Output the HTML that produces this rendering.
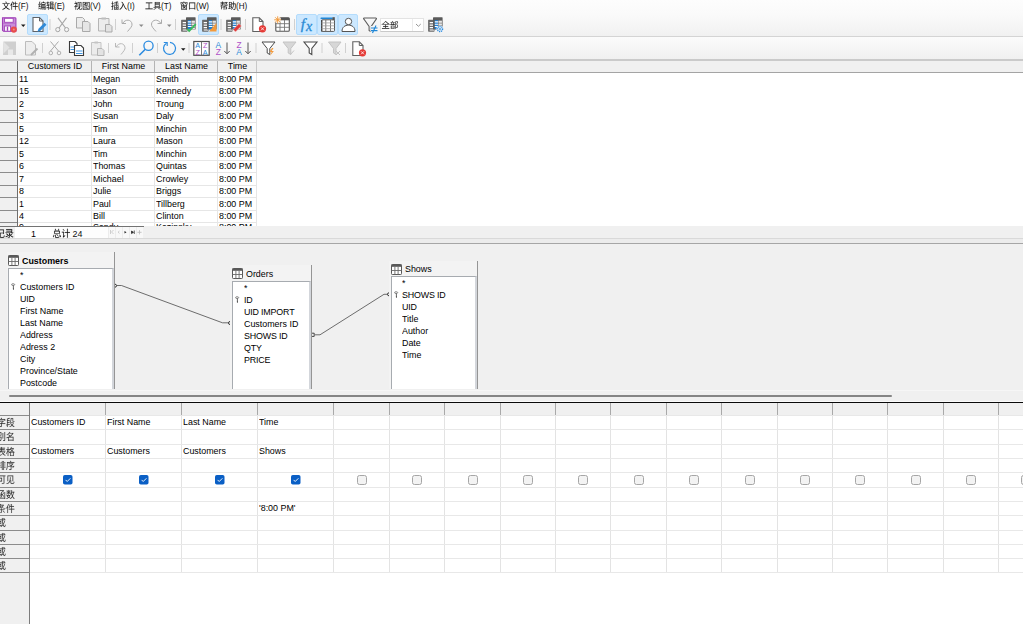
<!DOCTYPE html><html><head><meta charset='utf-8'><style>
*{margin:0;padding:0;box-sizing:border-box}
html,body{width:1023px;height:624px;overflow:hidden;background:#f0f0f0;font-family:"Liberation Sans", sans-serif;color:#000}
.a{position:absolute}
.t{position:absolute;white-space:nowrap;font-size:9.9px;line-height:12px;letter-spacing:0px;transform:scaleX(0.9);transform-origin:0 50%}
.c{transform-origin:50% 50%}
</style></head><body>
<div class='a' style='left:0;top:0;width:1023px;height:36px;background:linear-gradient(#fdfdfd 0%,#fafafa 40%,#f1f1f1 100%)'></div>
<div class='a' style='left:0;top:36px;width:1023px;height:1px;background:#d4d4d4'></div>
<div class='a' style='left:0;top:37px;width:1023px;height:23px;background:linear-gradient(#fbfbfb,#f0f0f0)'></div>
<div class='a' style='left:0;top:59px;width:1023px;height:2px;background:#cacaca'></div>
<div class='t' style='left:18.20px;top:0px;line-height:12px;color:#111;font-size:9px'>(F)</div>
<div class='t' style='left:54.20px;top:0px;line-height:12px;color:#111;font-size:9px'>(E)</div>
<div class='t' style='left:90.20px;top:0px;line-height:12px;color:#111;font-size:9px'>(V)</div>
<div class='t' style='left:127.20px;top:0px;line-height:12px;color:#111;font-size:9px'>(I)</div>
<div class='t' style='left:161.20px;top:0px;line-height:12px;color:#111;font-size:9px'>(T)</div>
<div class='t' style='left:196.20px;top:0px;line-height:12px;color:#111;font-size:9px'>(W)</div>
<div class='t' style='left:236.20px;top:0px;line-height:12px;color:#111;font-size:9px'>(H)</div>
<svg class='a' style='left:0;top:0' width='1023' height='60' viewBox='0 0 1023 60'><path d='M2.5 17.7h12.5c0.5 0 0.9 0.4 0.9 0.9v12.6h-12.5l-0.9-0.9z' fill='#c98fda' stroke='#a040b8' stroke-width='1.1'/><rect x='4.6' y='18.3' width='8.6' height='4' fill='#fff' stroke='#a040b8' stroke-width='0.9'/><path d='M3.2 23.3h12' stroke='#b562c8' stroke-width='0.7'/><rect x='4.6' y='26' width='6' height='5.2' fill='#fff' stroke='#a040b8' stroke-width='0.9'/><rect x='6.8' y='26.6' width='1.4' height='4.2' fill='#a040b8'/><circle cx='13.8' cy='29.6' r='3.1' fill='#e84c4c'/><circle cx='13.8' cy='29.6' r='1' fill='#f08a8a'/><path d='M21 24.6h4.5l-2.25 2.5z' fill='#1a1a1a'/><rect x='27.5' y='14.5' width='20' height='20' rx='1.5' fill='#cce8ff' stroke='#b4dcfc' stroke-width='1'/><path d='M33 17.5h6.5l3.5 3.5v10.5h-10z' fill='#fff' stroke='#5f6368' stroke-width='1.1'/><path d='M39.5 17.5v3.5h3.5' fill='none' stroke='#5f6368' stroke-width='1'/><path d='M37.5 31.8l1-3 6-6 2 2-6 6z' fill='#2f8ad8'/><path d='M50 19V30' stroke='#d0d0d0' stroke-width='1'/><path d='M58 17.8L65.5 28M66.5 17.8L59 28' stroke='#a6a6a6' stroke-width='1.1' fill='none'/><circle cx='57.8' cy='29.6' r='2.1' fill='none' stroke='#a6a6a6' stroke-width='1'/><circle cx='66.6' cy='29.6' r='2.1' fill='none' stroke='#a6a6a6' stroke-width='1'/><path d='M76.5 17.5h6l2 2v8.5h-8z' fill='#ececec' stroke='#a9a9a9'/><path d='M82.5 21.5h5.5l2 2v8h-7.5z' fill='#e6e6e6' stroke='#a9a9a9'/><path d='M98.5 18.5h10.5v12.5h-10.5z' fill='#ececec' stroke='#b5b5b5'/><path d='M101.5 17.5h4.5v2h-4.5z' fill='#bdbdbd'/><path d='M105.5 24.5h4.5l2 2v5.5h-6.5z' fill='#e3e3e3' stroke='#a9a9a9'/><path d='M115.5 19V30' stroke='#d0d0d0' stroke-width='1'/><path d='M122 19.5v4h4M122.5 23.5c3-5 9-4 9.5 0.5 0.3 2.3-1.5 4-4.5 7.5' stroke='#ababab' stroke-width='1' fill='none'/><path d='M139 24.6h4.5l-2.25 2.5z' fill='#8a8a8a'/><path d='M161.5 19.5v4h-4M161 23.5c-3-5-9-4-9.5 0.5-0.3 2.3 1.5 4 4.5 7.5' stroke='#ababab' stroke-width='1' fill='none'/><path d='M167 24.6h4.5l-2.25 2.5z' fill='#8a8a8a'/><path d='M175.5 19V30' stroke='#d0d0d0' stroke-width='1'/><rect x='181.1' y='19.8' width='6.4' height='11.9' rx='0.6' fill='#6a6a6a'/><path d='M182.7 22.6h4.3M182.7 25.1h4.3M182.7 27.6h4.3M182.7 30h4.3' stroke='#fff' stroke-width='1.1'/><rect x='186.0' y='17.2' width='9.6' height='12.4' rx='0.6' fill='#5a5a5a'/><rect x='187.8' y='20.2' width='3.2' height='9' fill='#1f7fd4'/><rect x='191.5' y='20.2' width='3.4' height='9' fill='#9a9a9a'/><path d='M187.8 21.9h3.2M187.8 24.2h3.2M187.8 26.5h3.2M191.5 21.9h3.4M191.5 24.2h3.4M191.5 26.5h3.4M191.5 28.7h3.4' stroke='#fff' stroke-width='1.1'/><path d='M187.2 28.8l2 2.2 6.6-6.8' stroke='#36bb5a' stroke-width='1.8' fill='none'/><rect x='198.5' y='14.5' width='20' height='20' rx='1.5' fill='#cce8ff' stroke='#b4dcfc' stroke-width='1'/><rect x='202.1' y='19.8' width='6.4' height='11.9' rx='0.6' fill='#6a6a6a'/><path d='M203.7 22.6h4.3M203.7 25.1h4.3M203.7 27.6h4.3M203.7 30h4.3' stroke='#fff' stroke-width='1.1'/><rect x='207.0' y='17.2' width='9.6' height='12.4' rx='0.6' fill='#5a5a5a'/><rect x='208.8' y='20.2' width='3.2' height='9' fill='#1f7fd4'/><rect x='212.5' y='20.2' width='3.4' height='9' fill='#9a9a9a'/><path d='M208.8 21.9h3.2M208.8 24.2h3.2M208.8 26.5h3.2M212.5 21.9h3.4M212.5 24.2h3.4M212.5 26.5h3.4M212.5 28.7h3.4' stroke='#fff' stroke-width='1.1'/><path d='M209 31.5h7.5v-8.5z' fill='#f39a3c'/><path d='M221 19V30' stroke='#d0d0d0' stroke-width='1'/><rect x='226.1' y='19.8' width='6.4' height='11.9' rx='0.6' fill='#6a6a6a'/><path d='M227.7 22.6h4.3M227.7 25.1h4.3M227.7 27.6h4.3M227.7 30h4.3' stroke='#fff' stroke-width='1.1'/><rect x='231.0' y='17.2' width='9.6' height='12.4' rx='0.6' fill='#5a5a5a'/><rect x='232.8' y='20.2' width='3.2' height='9' fill='#1f7fd4'/><rect x='236.5' y='20.2' width='3.4' height='9' fill='#9a9a9a'/><path d='M232.8 21.9h3.2M232.8 24.2h3.2M232.8 26.5h3.2M236.5 21.9h3.4M236.5 24.2h3.4M236.5 26.5h3.4M236.5 28.7h3.4' stroke='#fff' stroke-width='1.1'/><path d='M233 29.5l6-6 2.5 2.5-6 6z' fill='#e03a3a' stroke='#f0f0f0' stroke-width='0.5'/><path d='M245.5 19V30' stroke='#d0d0d0' stroke-width='1'/><path d='M252.8 17.8h6.5l3.7 3.7v10h-10.2z' fill='#fff' stroke='#606060' stroke-width='1.1'/><path d='M259.3 17.8v3.7h3.7' fill='none' stroke='#606060'/><circle cx='262.5' cy='28.8' r='3.6' fill='#e53935'/><path d='M261 27.3l3 3M264 27.3l-3 3' stroke='#fff' stroke-width='0.8'/><rect x='275.8' y='17.8' width='13.5' height='13.5' rx='1' fill='#fff' stroke='#555' stroke-width='1.1'/><rect x='275.8' y='17.8' width='13.5' height='2.5' fill='#555'/><path d='M280 20v11M284.5 20v11M276 23.7h13M276 27.3h13' stroke='#777' stroke-width='0.9'/><circle cx='277.7' cy='19.8' r='3.2' fill='#fafafa'/><path d='M277.7 16.3v7M274.2 19.8h7M275.2 17.3l5 5M280.2 17.3l-5 5' stroke='#f29633' stroke-width='0.9'/><path d='M294.5 19V30' stroke='#d0d0d0' stroke-width='1'/><rect x='296.5' y='14.5' width='20' height='20' rx='1.5' fill='#cce8ff' stroke='#b4dcfc' stroke-width='1'/><rect x='317.5' y='14.5' width='20' height='20' rx='1.5' fill='#cce8ff' stroke='#b4dcfc' stroke-width='1'/><rect x='338.5' y='14.5' width='19' height='20' rx='1.5' fill='#cce8ff' stroke='#b4dcfc' stroke-width='1'/><text x='300.8' y='28.6' font-family='Liberation Serif' font-style='italic' font-size='15.5' fill='#2a8ad4' stroke='#2a8ad4' stroke-width='0.3'>f</text><text x='306' y='30.6' font-family='Liberation Serif' font-style='italic' font-size='14' fill='#2a8ad4' stroke='#2a8ad4' stroke-width='0.3'>x</text><rect x='321.5' y='19.8' width='13' height='11.6' rx='0.8' fill='#fff' stroke='#555' stroke-width='1'/><path d='M321.2 18.2h11' stroke='#1f86d6' stroke-width='1.6' stroke-linecap='round'/><rect x='332.5' y='17.2' width='2.3' height='3' fill='#555'/><path d='M321.8 20v11.5' stroke='#444' stroke-width='1.3'/><path d='M325.8 20v11.5M330.5 20v11.5' stroke='#666' stroke-width='0.9'/><path d='M321.5 22.9h13M321.5 25.8h13M321.5 28.7h13' stroke='#9a9a9a' stroke-width='0.8'/><circle cx='348.5' cy='21.5' r='3.2' fill='#fff' stroke='#555' stroke-width='1'/><path d='M342 31.5c0-4.5 3-6.3 6.5-6.3s6.5 1.8 6.5 6.3z' fill='#fff' stroke='#555' stroke-width='1'/><path d='M363.5 18.8c0-0.5 0.3-0.8 0.8-0.8h11.5c0.5 0 0.9 0.4 0.6 0.9l-5.2 7.6v4.6c0 0.6-0.5 0.6-0.9 0.3l-1.2-1v-3.9l-5.3-7.5z' fill='none' stroke='#5c5c5c' stroke-width='1.05'/><rect x='370.5' y='26' width='7.5' height='6.5' fill='#f6f6f6'/><path d='M371 28h6.5M371 30.6h6.5M376 25.5l-3.5 7.5' stroke='#1f86d6' stroke-width='1.15'/><rect x='380.5' y='18.5' width='43' height='13' fill='#fff' stroke='#e3e3e3'/><path d='M380.5 31.5h43' stroke='#c9c9c9'/><path d='M412.5 19v12' stroke='#ececec'/><path d='M416 24l2.4 2.3 2.4-2.3' fill='none' stroke='#8a8a8a' stroke-width='0.9'/><rect x='428.1' y='19.8' width='6.4' height='11.9' rx='0.6' fill='#6a6a6a'/><path d='M429.7 22.6h4.3M429.7 25.1h4.3M429.7 27.6h4.3M429.7 30h4.3' stroke='#fff' stroke-width='1.1'/><rect x='433.0' y='17.2' width='9.6' height='12.4' rx='0.6' fill='#5a5a5a'/><rect x='434.8' y='20.2' width='3.2' height='9' fill='#1f7fd4'/><rect x='438.5' y='20.2' width='3.4' height='9' fill='#9a9a9a'/><path d='M434.8 21.9h3.2M434.8 24.2h3.2M434.8 26.5h3.2M438.5 21.9h3.4M438.5 24.2h3.4M438.5 26.5h3.4M438.5 28.7h3.4' stroke='#fff' stroke-width='1.1'/><circle cx='440' cy='29' r='3.6' fill='#f6f6f6'/><circle cx='440' cy='29' r='2.6' fill='none' stroke='#2a8be0' stroke-width='1.3' stroke-dasharray='1.2 0.7'/><circle cx='440' cy='29' r='1' fill='none' stroke='#2a8be0' stroke-width='0.8'/><path d='M3.5 41.5h12.5v13.5h-13z' fill='#cfcfcf'/><path d='M3.5 41.5l6 6-6 6' fill='#e2e2e2'/><rect x='8' y='49.5' width='5' height='5.5' fill='#e8e8e8'/><path d='M25.5 41.5h6.5l3.5 3.5v10h-10z' fill='#ededed' stroke='#bcbcbc'/><path d='M31 55l6.5-6.5' stroke='#b0b0b0' stroke-width='2'/><path d='M42.5 43V53' stroke='#d0d0d0' stroke-width='1'/><path d='M50.5 41.5L58.5 51M58.5 41.5L50.5 51' stroke='#a9a9a9' stroke-width='1'/><circle cx='50.8' cy='53' r='1.8' fill='none' stroke='#a9a9a9' stroke-width='0.9'/><circle cx='59' cy='53' r='1.8' fill='none' stroke='#a9a9a9' stroke-width='0.9'/><path d='M69.5 41.5h5.5l2 2v9h-7.5z' fill='#fff' stroke='#3a3a3a' stroke-width='1.1'/><path d='M70.5 47h5M70.5 49.5h5' stroke='#2a8be0' stroke-width='0.9'/><path d='M74.5 45.5h6.5l2.5 2.5v7.5h-9z' fill='#fff' stroke='#3a3a3a' stroke-width='1.1'/><path d='M76 51h6.5M76 53.5h6.5' stroke='#2a8be0' stroke-width='0.9'/><path d='M91.5 42.5h9.5v12.5h-9.5z' fill='#ececec' stroke='#c4c4c4'/><path d='M94.5 41.5h3.5v2h-3.5z' fill='#c4c4c4'/><path d='M97.5 48.5h4.5l2 2v5h-6.5z' fill='#e3e3e3' stroke='#b5b5b5'/><path d='M108.5 43V53' stroke='#d0d0d0' stroke-width='1'/><path d='M115.5 43v4h4M116 47c3-5 8.5-4 9 0.5 0.3 2-1.2 3.5-4 7' stroke='#b9b9b9' stroke-width='1' fill='none'/><path d='M132.5 43V53' stroke='#d0d0d0' stroke-width='1'/><circle cx='148.5' cy='45.8' r='4.6' fill='none' stroke='#2a8be0' stroke-width='1.3'/><path d='M145.3 49.2l-6 6' stroke='#2a8be0' stroke-width='1.6'/><path d='M157.5 43V53' stroke='#d0d0d0' stroke-width='1'/><path d='M166.5 43.2a6 6 0 1 0 3.5 -0.8' fill='none' stroke='#2a8be0' stroke-width='1.2'/><path d='M163.8 42.5h3.4v3.5' fill='none' stroke='#2a8be0' stroke-width='1.1'/><path d='M181 48.3h4.5l-2.25 2.5z' fill='#1a1a1a'/><path d='M189 43V53' stroke='#d0d0d0' stroke-width='1'/><rect x='193.8' y='41.5' width='15.4' height='13.8' fill='#fff' stroke='#505050' stroke-width='1.2'/><path d='M201.5 41.5v14' stroke='#6a6a6a' stroke-width='0.9'/><text x='195.3' y='47.6' font-size='7.2' fill='#2a8ad8'>A</text><text x='195.5' y='54.6' font-size='7.2' fill='#b050c8'>Z</text><text x='202.9' y='47.6' font-size='7.2' fill='#b050c8'>Z</text><text x='202.7' y='54.6' font-size='7.2' fill='#2a8ad8'>A</text><text x='215.4' y='47.8' font-size='8.4' fill='#2a8ad8'>A</text><text x='215.8' y='54.8' font-size='8.4' fill='#b050c8'>Z</text><path d='M227 42.5v11M224.3 51l2.7 2.8 2.7-2.8' stroke='#555' stroke-width='1' fill='none'/><text x='236.6' y='47.8' font-size='8.4' fill='#b050c8'>Z</text><text x='236.2' y='54.8' font-size='8.4' fill='#2a8ad8'>A</text><path d='M248 42.5v11M245.3 51l2.7 2.8 2.7-2.8' stroke='#555' stroke-width='1' fill='none'/><path d='M256 43V53' stroke='#d0d0d0' stroke-width='1'/><path d='M262 42h13l-5.2 6.5v6l-2.6-1.5v-4.5z' fill='#fff' stroke='#4a4a4a' stroke-width='1'/><path d='M272 48l-2.5 4h2.2l-1.8 4 4-5h-2.2l1.8-3z' fill='#f39a3c'/><path d='M283 42h13l-5.2 6.5v6l-2.6-1.5v-4.5z' fill='#d7d7d7' stroke='#c4c4c4'/><path d='M290.5 54.5l3.5-4' stroke='#c4c4c4'/><path d='M304 42h13l-5.2 6.5v6l-2.6-1.5v-4.5z' fill='#fff' stroke='#4a4a4a' stroke-width='1.1'/><path d='M322 43V53' stroke='#d0d0d0' stroke-width='1'/><path d='M328.5 42h12.5l-5 6.5v6l-2.5-1.5v-4.5z' fill='#d7d7d7' stroke='#c4c4c4'/><path d='M336 51l4 4M340 51l-4 4' stroke='#c4c4c4'/><path d='M345.5 43V53' stroke='#d0d0d0' stroke-width='1'/><path d='M352.8 41.8h6.5l3.7 3.7v10h-10.2z' fill='#fff' stroke='#606060' stroke-width='1.1'/><path d='M359.3 41.8v3.7h3.7' fill='none' stroke='#606060'/><circle cx='362.5' cy='52.8' r='3.6' fill='#e53935'/><path d='M361 51.3l3 3M364 51.3l-3 3' stroke='#fff' stroke-width='0.8'/></svg>
<div class='a' style='left:0;top:61px;width:1023px;height:167px;background:#fff'></div>
<div class='a' style='left:0;top:61px;width:1023px;height:11px;background:#f0f0f0'></div>
<div class='a' style='left:0;top:72px;width:1023px;height:1px;background:#a4a4a4'></div>
<div class='a' style='left:0;top:72px;width:17px;height:1px;background:#707070'></div>
<div class='a' style='left:0;top:73px;width:17px;height:154px;background:#f0f0f0'></div>
<div class='a' style='left:17px;top:61px;width:1px;height:166px;background:#6e6e6e'></div>
<div class='a' style='left:91px;top:61px;width:1px;height:11px;background:#b4b4b4'></div>
<div class='a' style='left:91px;top:73px;width:1px;height:154px;background:#e6e6e6'></div>
<div class='a' style='left:154px;top:61px;width:1px;height:11px;background:#b4b4b4'></div>
<div class='a' style='left:154px;top:73px;width:1px;height:154px;background:#e6e6e6'></div>
<div class='a' style='left:217px;top:61px;width:1px;height:11px;background:#b4b4b4'></div>
<div class='a' style='left:217px;top:73px;width:1px;height:154px;background:#e6e6e6'></div>
<div class='a' style='left:256px;top:61px;width:1px;height:11px;background:#b4b4b4'></div>
<div class='a' style='left:256px;top:73px;width:1px;height:154px;background:#e6e6e6'></div>
<div class='a' style='left:256px;top:61px;width:1px;height:11px;background:#c8c8c8'></div>
<div class='t dg c' style='left:18px;top:60.3px;width:74px;text-align:center;line-height:12px'>Customers ID</div>
<div class='t dg c' style='left:92px;top:60.3px;width:63px;text-align:center;line-height:12px'>First Name</div>
<div class='t dg c' style='left:155px;top:60.3px;width:63px;text-align:center;line-height:12px'>Last Name</div>
<div class='t dg c' style='left:218px;top:60.3px;width:39px;text-align:center;line-height:12px'>Time</div>
<div class='a' style='left:0;top:84.50px;width:17px;height:1px;background:#8c8c8c'></div>
<div class='a' style='left:18px;top:84.50px;width:239px;height:1px;background:#e6e6e6'></div>
<div class='t dg' style='left:18.5px;top:72.60px;line-height:12.5px'>11</div>
<div class='t dg' style='left:92.5px;top:72.60px;line-height:12.5px'>Megan</div>
<div class='t dg' style='left:155.5px;top:72.60px;line-height:12.5px'>Smith</div>
<div class='t dg' style='left:218.5px;top:72.60px;line-height:12.5px'>8:00 PM</div>
<div class='a' style='left:0;top:97.00px;width:17px;height:1px;background:#8c8c8c'></div>
<div class='a' style='left:18px;top:97.00px;width:239px;height:1px;background:#e6e6e6'></div>
<div class='t dg' style='left:18.5px;top:85.10px;line-height:12.5px'>15</div>
<div class='t dg' style='left:92.5px;top:85.10px;line-height:12.5px'>Jason</div>
<div class='t dg' style='left:155.5px;top:85.10px;line-height:12.5px'>Kennedy</div>
<div class='t dg' style='left:218.5px;top:85.10px;line-height:12.5px'>8:00 PM</div>
<div class='a' style='left:0;top:109.50px;width:17px;height:1px;background:#8c8c8c'></div>
<div class='a' style='left:18px;top:109.50px;width:239px;height:1px;background:#e6e6e6'></div>
<div class='t dg' style='left:18.5px;top:97.60px;line-height:12.5px'>2</div>
<div class='t dg' style='left:92.5px;top:97.60px;line-height:12.5px'>John</div>
<div class='t dg' style='left:155.5px;top:97.60px;line-height:12.5px'>Troung</div>
<div class='t dg' style='left:218.5px;top:97.60px;line-height:12.5px'>8:00 PM</div>
<div class='a' style='left:0;top:122.00px;width:17px;height:1px;background:#8c8c8c'></div>
<div class='a' style='left:18px;top:122.00px;width:239px;height:1px;background:#e6e6e6'></div>
<div class='t dg' style='left:18.5px;top:110.10px;line-height:12.5px'>3</div>
<div class='t dg' style='left:92.5px;top:110.10px;line-height:12.5px'>Susan</div>
<div class='t dg' style='left:155.5px;top:110.10px;line-height:12.5px'>Daly</div>
<div class='t dg' style='left:218.5px;top:110.10px;line-height:12.5px'>8:00 PM</div>
<div class='a' style='left:0;top:134.50px;width:17px;height:1px;background:#8c8c8c'></div>
<div class='a' style='left:18px;top:134.50px;width:239px;height:1px;background:#e6e6e6'></div>
<div class='t dg' style='left:18.5px;top:122.60px;line-height:12.5px'>5</div>
<div class='t dg' style='left:92.5px;top:122.60px;line-height:12.5px'>Tim</div>
<div class='t dg' style='left:155.5px;top:122.60px;line-height:12.5px'>Minchin</div>
<div class='t dg' style='left:218.5px;top:122.60px;line-height:12.5px'>8:00 PM</div>
<div class='a' style='left:0;top:147.00px;width:17px;height:1px;background:#8c8c8c'></div>
<div class='a' style='left:18px;top:147.00px;width:239px;height:1px;background:#e6e6e6'></div>
<div class='t dg' style='left:18.5px;top:135.10px;line-height:12.5px'>12</div>
<div class='t dg' style='left:92.5px;top:135.10px;line-height:12.5px'>Laura</div>
<div class='t dg' style='left:155.5px;top:135.10px;line-height:12.5px'>Mason</div>
<div class='t dg' style='left:218.5px;top:135.10px;line-height:12.5px'>8:00 PM</div>
<div class='a' style='left:0;top:159.50px;width:17px;height:1px;background:#8c8c8c'></div>
<div class='a' style='left:18px;top:159.50px;width:239px;height:1px;background:#e6e6e6'></div>
<div class='t dg' style='left:18.5px;top:147.60px;line-height:12.5px'>5</div>
<div class='t dg' style='left:92.5px;top:147.60px;line-height:12.5px'>Tim</div>
<div class='t dg' style='left:155.5px;top:147.60px;line-height:12.5px'>Minchin</div>
<div class='t dg' style='left:218.5px;top:147.60px;line-height:12.5px'>8:00 PM</div>
<div class='a' style='left:0;top:172.00px;width:17px;height:1px;background:#8c8c8c'></div>
<div class='a' style='left:18px;top:172.00px;width:239px;height:1px;background:#e6e6e6'></div>
<div class='t dg' style='left:18.5px;top:160.10px;line-height:12.5px'>6</div>
<div class='t dg' style='left:92.5px;top:160.10px;line-height:12.5px'>Thomas</div>
<div class='t dg' style='left:155.5px;top:160.10px;line-height:12.5px'>Quintas</div>
<div class='t dg' style='left:218.5px;top:160.10px;line-height:12.5px'>8:00 PM</div>
<div class='a' style='left:0;top:184.50px;width:17px;height:1px;background:#8c8c8c'></div>
<div class='a' style='left:18px;top:184.50px;width:239px;height:1px;background:#e6e6e6'></div>
<div class='t dg' style='left:18.5px;top:172.60px;line-height:12.5px'>7</div>
<div class='t dg' style='left:92.5px;top:172.60px;line-height:12.5px'>Michael</div>
<div class='t dg' style='left:155.5px;top:172.60px;line-height:12.5px'>Crowley</div>
<div class='t dg' style='left:218.5px;top:172.60px;line-height:12.5px'>8:00 PM</div>
<div class='a' style='left:0;top:197.00px;width:17px;height:1px;background:#8c8c8c'></div>
<div class='a' style='left:18px;top:197.00px;width:239px;height:1px;background:#e6e6e6'></div>
<div class='t dg' style='left:18.5px;top:185.10px;line-height:12.5px'>8</div>
<div class='t dg' style='left:92.5px;top:185.10px;line-height:12.5px'>Julie</div>
<div class='t dg' style='left:155.5px;top:185.10px;line-height:12.5px'>Briggs</div>
<div class='t dg' style='left:218.5px;top:185.10px;line-height:12.5px'>8:00 PM</div>
<div class='a' style='left:0;top:209.50px;width:17px;height:1px;background:#8c8c8c'></div>
<div class='a' style='left:18px;top:209.50px;width:239px;height:1px;background:#e6e6e6'></div>
<div class='t dg' style='left:18.5px;top:197.60px;line-height:12.5px'>1</div>
<div class='t dg' style='left:92.5px;top:197.60px;line-height:12.5px'>Paul</div>
<div class='t dg' style='left:155.5px;top:197.60px;line-height:12.5px'>Tillberg</div>
<div class='t dg' style='left:218.5px;top:197.60px;line-height:12.5px'>8:00 PM</div>
<div class='a' style='left:0;top:222.00px;width:17px;height:1px;background:#8c8c8c'></div>
<div class='a' style='left:18px;top:222.00px;width:239px;height:1px;background:#e6e6e6'></div>
<div class='t dg' style='left:18.5px;top:210.10px;line-height:12.5px'>4</div>
<div class='t dg' style='left:92.5px;top:210.10px;line-height:12.5px'>Bill</div>
<div class='t dg' style='left:155.5px;top:210.10px;line-height:12.5px'>Clinton</div>
<div class='t dg' style='left:218.5px;top:210.10px;line-height:12.5px'>8:00 PM</div>
<div class='a' style='left:0;top:234.50px;width:17px;height:1px;background:#8c8c8c'></div>
<div class='a' style='left:18px;top:234.50px;width:239px;height:1px;background:#e6e6e6'></div>
<div class='t dg' style='left:18.5px;top:221.20px;line-height:12.5px'>9</div>
<div class='t dg' style='left:92.5px;top:221.20px;line-height:12.5px'>Sandy</div>
<div class='t dg' style='left:155.5px;top:221.20px;line-height:12.5px'>Kazinsky</div>
<div class='t dg' style='left:218.5px;top:221.20px;line-height:12.5px'>8:00 PM</div>
<div class='a' style='left:0;top:226px;width:1023px;height:12px;background:#f0f0f0'></div>
<div class='a' style='left:0;top:226px;width:144px;height:1px;background:#737373'></div>
<div class='a' style='left:15px;top:227px;width:36px;height:11px;background:#fff'></div>
<div class='a' style='left:51px;top:227px;width:57px;height:11px;background:#fdfdfd'></div>
<div class='t' style='left:31px;top:227.6px;line-height:12px'>1</div>
<div class='t' style='left:70.32px;top:227.6px;line-height:12px;color:#111;'>&#160;24</div>
<div class='a' style='left:108px;top:227px;width:7px;height:11px;background:#f8f8f8;border-left:1px solid #ececec'></div>
<div class='a' style='left:115px;top:227px;width:7px;height:11px;background:#f8f8f8;border-left:1px solid #ececec'></div>
<div class='a' style='left:122px;top:227px;width:7px;height:11px;background:#f8f8f8;border-left:1px solid #ececec'></div>
<div class='a' style='left:129px;top:227px;width:7px;height:11px;background:#f8f8f8;border-left:1px solid #ececec'></div>
<div class='a' style='left:136px;top:227px;width:7px;height:11px;background:#f8f8f8;border-left:1px solid #ececec'></div>
<svg class='a' style='left:0;top:226px' width='150' height='12' viewBox='0 226 150 12'><path d='M110.5 230v4M113.5 230l-2 2 2 2' stroke='#c4c4c4' stroke-width='0.8' fill='none'/><path d='M119.5 231l-1.5 1.2 1.5 1.2' stroke='#c4c4c4' stroke-width='0.8' fill='none'/><path d='M124.5 231v2.6l2-1.3z' fill='#222'/><path d='M131.5 231v2.6l2-1.3zM134.3 230.5v3.5' fill='#222' stroke='#222' stroke-width='0.7'/><path d='M139.5 230.2v4.2M137.4 232.3h4.2' stroke='#bdbdbd' stroke-width='0.9'/></svg>
<div class='a' style='left:0;top:238px;width:1023px;height:1px;background:#d9d9d9'></div>
<div class='a' style='left:0;top:239px;width:1023px;height:4px;background:#ececec'></div>
<div class='a' style='left:0;top:243px;width:1023px;height:1px;background:#a6a6a6'></div>
<div class='a' style='left:0;top:244px;width:1023px;height:145px;background:#f0f0f0'></div>
<div class='a' style='left:7px;top:252px;width:107px;height:137px;background:#f3f3f3'></div>
<div class='a' style='left:114px;top:252px;width:1px;height:137px;background:#959595'></div>
<svg class='a' style='left:8px;top:255px' width='11' height='11' viewBox='0 0 11 11'><rect x='0.5' y='0.5' width='10' height='10' rx='0.8' fill='#fff' stroke='#595959'/><rect x='0.5' y='0.5' width='10' height='2.3' fill='#595959'/><path d='M3.9 2.8v7.7M7.1 2.8v7.7M0.5 6.5h10' stroke='#6a6a6a' stroke-width='0.9'/></svg>
<div class='t' style='left:22px;top:255.4px;font-weight:bold'>Customers</div>
<div class='a' style='left:8px;top:268px;width:106px;height:121px;background:#fff;border-left:1px solid #a7abb0;border-top:1px solid #a7abb0;border-right:2px solid #d3d6db'></div>
<div class='t' style='left:19.5px;top:268.5px;'>*</div>
<div class='t' style='left:19.5px;top:280.5px;'>Customers ID</div>
<div class='t' style='left:19.5px;top:292.5px;letter-spacing:-0.2px;'>UID</div>
<div class='t' style='left:19.5px;top:304.5px;'>First Name</div>
<div class='t' style='left:19.5px;top:316.5px;'>Last Name</div>
<div class='t' style='left:19.5px;top:328.5px;'>Address</div>
<div class='t' style='left:19.5px;top:340.5px;'>Adress 2</div>
<div class='t' style='left:19.5px;top:352.5px;'>City</div>
<div class='t' style='left:19.5px;top:364.5px;'>Province/State</div>
<div class='t' style='left:19.5px;top:376.5px;'>Postcode</div>
<svg class='a' style='left:11.0px;top:282.5px' width='7' height='8' viewBox='0 0 7 8'><ellipse cx='2.1' cy='1.6' rx='1.6' ry='0.85' fill='none' stroke='#7a7a7a' stroke-width='0.9'/><path d='M2.4 2.4v3.6' stroke='#555' stroke-width='0.9'/><circle cx='2.4' cy='6.1' r='0.55' fill='#222'/></svg>
<div class='a' style='left:230px;top:265px;width:81px;height:124px;background:#f3f3f3'></div>
<div class='a' style='left:311px;top:265px;width:1px;height:124px;background:#959595'></div>
<svg class='a' style='left:232px;top:268px' width='11' height='11' viewBox='0 0 11 11'><rect x='0.5' y='0.5' width='10' height='10' rx='0.8' fill='#fff' stroke='#595959'/><rect x='0.5' y='0.5' width='10' height='2.3' fill='#595959'/><path d='M3.9 2.8v7.7M7.1 2.8v7.7M0.5 6.5h10' stroke='#6a6a6a' stroke-width='0.9'/></svg>
<div class='t' style='left:246px;top:267.9px;font-weight:normal'>Orders</div>
<div class='a' style='left:232px;top:281px;width:79px;height:108px;background:#fff;border-left:1px solid #a7abb0;border-top:1px solid #a7abb0;border-right:2px solid #d3d6db'></div>
<div class='t' style='left:243.5px;top:281.5px;'>*</div>
<div class='t' style='left:243.5px;top:293.5px;letter-spacing:-0.2px;'>ID</div>
<div class='t' style='left:243.5px;top:305.5px;letter-spacing:-0.2px;'>UID IMPORT</div>
<div class='t' style='left:243.5px;top:317.5px;'>Customers ID</div>
<div class='t' style='left:243.5px;top:329.5px;letter-spacing:-0.2px;'>SHOWS ID</div>
<div class='t' style='left:243.5px;top:341.5px;letter-spacing:-0.2px;'>QTY</div>
<div class='t' style='left:243.5px;top:353.5px;letter-spacing:-0.2px;'>PRICE</div>
<svg class='a' style='left:235.0px;top:295.5px' width='7' height='8' viewBox='0 0 7 8'><ellipse cx='2.1' cy='1.6' rx='1.6' ry='0.85' fill='none' stroke='#7a7a7a' stroke-width='0.9'/><path d='M2.4 2.4v3.6' stroke='#555' stroke-width='0.9'/><circle cx='2.4' cy='6.1' r='0.55' fill='#222'/></svg>
<div class='a' style='left:389px;top:261px;width:88px;height:128px;background:#f3f3f3'></div>
<div class='a' style='left:477px;top:261px;width:1px;height:128px;background:#959595'></div>
<svg class='a' style='left:391px;top:264px' width='11' height='11' viewBox='0 0 11 11'><rect x='0.5' y='0.5' width='10' height='10' rx='0.8' fill='#fff' stroke='#595959'/><rect x='0.5' y='0.5' width='10' height='2.3' fill='#595959'/><path d='M3.9 2.8v7.7M7.1 2.8v7.7M0.5 6.5h10' stroke='#6a6a6a' stroke-width='0.9'/></svg>
<div class='t' style='left:405px;top:263.2px;font-weight:normal'>Shows</div>
<div class='a' style='left:391px;top:276px;width:86px;height:113px;background:#fff;border-left:1px solid #a7abb0;border-top:1px solid #a7abb0;border-right:2px solid #d3d6db'></div>
<div class='t' style='left:402px;top:276.5px;'>*</div>
<div class='t' style='left:402px;top:288.5px;letter-spacing:-0.2px;'>SHOWS ID</div>
<div class='t' style='left:402px;top:300.5px;letter-spacing:-0.2px;'>UID</div>
<div class='t' style='left:402px;top:312.5px;'>Title</div>
<div class='t' style='left:402px;top:324.5px;'>Author</div>
<div class='t' style='left:402px;top:336.5px;'>Date</div>
<div class='t' style='left:402px;top:348.5px;'>Time</div>
<svg class='a' style='left:393.5px;top:290.5px' width='7' height='8' viewBox='0 0 7 8'><ellipse cx='2.1' cy='1.6' rx='1.6' ry='0.85' fill='none' stroke='#7a7a7a' stroke-width='0.9'/><path d='M2.4 2.4v3.6' stroke='#555' stroke-width='0.9'/><circle cx='2.4' cy='6.1' r='0.55' fill='#222'/></svg>
<svg class='a' style='left:0;top:244px' width='1023' height='145' viewBox='0 244 1023 145'><path d='M117 285.5H121.5L222.5 322.8H228' stroke='#4a4a4a' stroke-width='0.8' fill='none'/><path d='M115 284.2a1.5 1.5 0 0 1 0 3' stroke='#333' stroke-width='1' fill='none'/><path d='M230 321.5a1.5 1.5 0 0 0 0 3' stroke='#333' stroke-width='1' fill='none'/><path d='M315 334.8H320L384 294.3H387.5' stroke='#4a4a4a' stroke-width='0.8' fill='none'/><path d='M312 333.2h2.2v3.2h-2.2' stroke='#333' stroke-width='0.9' fill='none'/><path d='M389 292.8a1.5 1.5 0 0 0 0 3' stroke='#333' stroke-width='1' fill='none'/></svg>
<div class='a' style='left:0;top:389px;width:1023px;height:13px;background:#f0f0f0'></div>
<div class='a' style='left:0;top:390px;width:1023px;height:1px;background:#f6f6f6'></div>
<div class='a' style='left:0;top:401px;width:1023px;height:1px;background:#fbfbfb'></div>
<div class='a' style='left:9px;top:394.8px;width:883px;height:2.4px;background:#858585;border-radius:1.2px'></div>
<div class='a' style='left:0;top:402px;width:1023px;height:1px;background:#0a0a0a'></div>
<div class='a' style='left:0;top:403px;width:1023px;height:221px;background:#fff'></div>
<div class='a' style='left:0;top:403px;width:1023px;height:12px;background:#f0f0f0'></div>
<div class='a' style='left:0;top:403px;width:29px;height:221px;background:#f0f0f0'></div>
<div class='a' style='left:29px;top:403px;width:1px;height:221px;background:#7c7c7c'></div>
<div class='a' style='left:105px;top:403px;width:1px;height:12px;background:#a9a9a9'></div>
<div class='a' style='left:105px;top:415px;width:1px;height:157px;background:#e3e3e3'></div>
<div class='a' style='left:181px;top:403px;width:1px;height:12px;background:#a9a9a9'></div>
<div class='a' style='left:181px;top:415px;width:1px;height:157px;background:#e3e3e3'></div>
<div class='a' style='left:257px;top:403px;width:1px;height:12px;background:#a9a9a9'></div>
<div class='a' style='left:257px;top:415px;width:1px;height:157px;background:#e3e3e3'></div>
<div class='a' style='left:333px;top:403px;width:1px;height:12px;background:#a9a9a9'></div>
<div class='a' style='left:333px;top:415px;width:1px;height:157px;background:#e3e3e3'></div>
<div class='a' style='left:389px;top:403px;width:1px;height:12px;background:#a9a9a9'></div>
<div class='a' style='left:389px;top:415px;width:1px;height:157px;background:#e3e3e3'></div>
<div class='a' style='left:444px;top:403px;width:1px;height:12px;background:#a9a9a9'></div>
<div class='a' style='left:444px;top:415px;width:1px;height:157px;background:#e3e3e3'></div>
<div class='a' style='left:500px;top:403px;width:1px;height:12px;background:#a9a9a9'></div>
<div class='a' style='left:500px;top:415px;width:1px;height:157px;background:#e3e3e3'></div>
<div class='a' style='left:555px;top:403px;width:1px;height:12px;background:#a9a9a9'></div>
<div class='a' style='left:555px;top:415px;width:1px;height:157px;background:#e3e3e3'></div>
<div class='a' style='left:610px;top:403px;width:1px;height:12px;background:#a9a9a9'></div>
<div class='a' style='left:610px;top:415px;width:1px;height:157px;background:#e3e3e3'></div>
<div class='a' style='left:666px;top:403px;width:1px;height:12px;background:#a9a9a9'></div>
<div class='a' style='left:666px;top:415px;width:1px;height:157px;background:#e3e3e3'></div>
<div class='a' style='left:721px;top:403px;width:1px;height:12px;background:#a9a9a9'></div>
<div class='a' style='left:721px;top:415px;width:1px;height:157px;background:#e3e3e3'></div>
<div class='a' style='left:777px;top:403px;width:1px;height:12px;background:#a9a9a9'></div>
<div class='a' style='left:777px;top:415px;width:1px;height:157px;background:#e3e3e3'></div>
<div class='a' style='left:832px;top:403px;width:1px;height:12px;background:#a9a9a9'></div>
<div class='a' style='left:832px;top:415px;width:1px;height:157px;background:#e3e3e3'></div>
<div class='a' style='left:887px;top:403px;width:1px;height:12px;background:#a9a9a9'></div>
<div class='a' style='left:887px;top:415px;width:1px;height:157px;background:#e3e3e3'></div>
<div class='a' style='left:943px;top:403px;width:1px;height:12px;background:#a9a9a9'></div>
<div class='a' style='left:943px;top:415px;width:1px;height:157px;background:#e3e3e3'></div>
<div class='a' style='left:998px;top:403px;width:1px;height:12px;background:#a9a9a9'></div>
<div class='a' style='left:998px;top:415px;width:1px;height:157px;background:#e3e3e3'></div>
<div class='a' style='left:1053px;top:403px;width:1px;height:12px;background:#a9a9a9'></div>
<div class='a' style='left:1053px;top:415px;width:1px;height:157px;background:#e3e3e3'></div>
<div class='a' style='left:0;top:415px;width:29px;height:1px;background:#8c8c8c'></div>
<div class='a' style='left:30px;top:415px;width:993px;height:1px;background:#e8e8e8'></div>
<div class='a' style='left:0;top:429px;width:29px;height:1px;background:#8c8c8c'></div>
<div class='a' style='left:30px;top:429px;width:993px;height:1px;background:#e8e8e8'></div>
<div class='a' style='left:0;top:444px;width:29px;height:1px;background:#8c8c8c'></div>
<div class='a' style='left:30px;top:444px;width:993px;height:1px;background:#e8e8e8'></div>
<div class='a' style='left:0;top:458px;width:29px;height:1px;background:#8c8c8c'></div>
<div class='a' style='left:30px;top:458px;width:993px;height:1px;background:#e8e8e8'></div>
<div class='a' style='left:0;top:472px;width:29px;height:1px;background:#8c8c8c'></div>
<div class='a' style='left:30px;top:472px;width:993px;height:1px;background:#e8e8e8'></div>
<div class='a' style='left:0;top:487px;width:29px;height:1px;background:#8c8c8c'></div>
<div class='a' style='left:30px;top:487px;width:993px;height:1px;background:#e8e8e8'></div>
<div class='a' style='left:0;top:501px;width:29px;height:1px;background:#8c8c8c'></div>
<div class='a' style='left:30px;top:501px;width:993px;height:1px;background:#e8e8e8'></div>
<div class='a' style='left:0;top:515px;width:29px;height:1px;background:#8c8c8c'></div>
<div class='a' style='left:30px;top:515px;width:993px;height:1px;background:#e8e8e8'></div>
<div class='a' style='left:0;top:530px;width:29px;height:1px;background:#8c8c8c'></div>
<div class='a' style='left:30px;top:530px;width:993px;height:1px;background:#e8e8e8'></div>
<div class='a' style='left:0;top:544px;width:29px;height:1px;background:#8c8c8c'></div>
<div class='a' style='left:30px;top:544px;width:993px;height:1px;background:#e8e8e8'></div>
<div class='a' style='left:0;top:558px;width:29px;height:1px;background:#8c8c8c'></div>
<div class='a' style='left:30px;top:558px;width:993px;height:1px;background:#e8e8e8'></div>
<div class='a' style='left:0;top:572px;width:29px;height:1px;background:#8c8c8c'></div>
<div class='a' style='left:30px;top:572px;width:993px;height:1px;background:#e8e8e8'></div>
<div class='t' style='left:30.50px;top:414.60px;line-height:14px'>Customers ID</div>
<div class='t' style='left:106.50px;top:414.60px;line-height:14px'>First Name</div>
<div class='t' style='left:182.50px;top:414.60px;line-height:14px'>Last Name</div>
<div class='t' style='left:258.50px;top:414.60px;line-height:14px'>Time</div>
<div class='t' style='left:30.50px;top:443.60px;line-height:14px'>Customers</div>
<div class='t' style='left:106.50px;top:443.60px;line-height:14px'>Customers</div>
<div class='t' style='left:182.50px;top:443.60px;line-height:14px'>Customers</div>
<div class='t' style='left:258.50px;top:443.60px;line-height:14px'>Shows</div>
<div class='t' style='left:258.50px;top:500.60px;line-height:14px'>'8:00 PM'</div>
<svg class='a' style='left:63.00px;top:475px' width='10' height='10' viewBox='0 0 10 10'><rect x='0' y='0' width='9.5' height='9.5' rx='1.8' fill='#0a5fc5'/><path d='M2.6 4.9l1.6 1.6 3.2-3.2' stroke='#fff' stroke-width='0.9' fill='none'/></svg>
<svg class='a' style='left:139.00px;top:475px' width='10' height='10' viewBox='0 0 10 10'><rect x='0' y='0' width='9.5' height='9.5' rx='1.8' fill='#0a5fc5'/><path d='M2.6 4.9l1.6 1.6 3.2-3.2' stroke='#fff' stroke-width='0.9' fill='none'/></svg>
<svg class='a' style='left:215.00px;top:475px' width='10' height='10' viewBox='0 0 10 10'><rect x='0' y='0' width='9.5' height='9.5' rx='1.8' fill='#0a5fc5'/><path d='M2.6 4.9l1.6 1.6 3.2-3.2' stroke='#fff' stroke-width='0.9' fill='none'/></svg>
<svg class='a' style='left:291.00px;top:475px' width='10' height='10' viewBox='0 0 10 10'><rect x='0' y='0' width='9.5' height='9.5' rx='1.8' fill='#0a5fc5'/><path d='M2.6 4.9l1.6 1.6 3.2-3.2' stroke='#fff' stroke-width='0.9' fill='none'/></svg>
<div class='a' style='left:356.50px;top:475px;width:10px;height:10px;background:#f3f3f3;border:1px solid #a6a6a6;border-radius:2.5px'></div>
<div class='a' style='left:412.00px;top:475px;width:10px;height:10px;background:#f3f3f3;border:1px solid #a6a6a6;border-radius:2.5px'></div>
<div class='a' style='left:467.50px;top:475px;width:10px;height:10px;background:#f3f3f3;border:1px solid #a6a6a6;border-radius:2.5px'></div>
<div class='a' style='left:523.00px;top:475px;width:10px;height:10px;background:#f3f3f3;border:1px solid #a6a6a6;border-radius:2.5px'></div>
<div class='a' style='left:578.00px;top:475px;width:10px;height:10px;background:#f3f3f3;border:1px solid #a6a6a6;border-radius:2.5px'></div>
<div class='a' style='left:633.50px;top:475px;width:10px;height:10px;background:#f3f3f3;border:1px solid #a6a6a6;border-radius:2.5px'></div>
<div class='a' style='left:689.00px;top:475px;width:10px;height:10px;background:#f3f3f3;border:1px solid #a6a6a6;border-radius:2.5px'></div>
<div class='a' style='left:744.50px;top:475px;width:10px;height:10px;background:#f3f3f3;border:1px solid #a6a6a6;border-radius:2.5px'></div>
<div class='a' style='left:800.00px;top:475px;width:10px;height:10px;background:#f3f3f3;border:1px solid #a6a6a6;border-radius:2.5px'></div>
<div class='a' style='left:855.00px;top:475px;width:10px;height:10px;background:#f3f3f3;border:1px solid #a6a6a6;border-radius:2.5px'></div>
<div class='a' style='left:910.50px;top:475px;width:10px;height:10px;background:#f3f3f3;border:1px solid #a6a6a6;border-radius:2.5px'></div>
<div class='a' style='left:966.00px;top:475px;width:10px;height:10px;background:#f3f3f3;border:1px solid #a6a6a6;border-radius:2.5px'></div>
<div class='a' style='left:1021.00px;top:475px;width:10px;height:10px;background:#f3f3f3;border:1px solid #a6a6a6;border-radius:2.5px'></div>
<svg class='a' style='left:0;top:0;pointer-events:none' width='1023' height='624' viewBox='0 0 1023 624'><path d='M423 823C453 774 485 707 497 666L580 693C566 734 531 799 501 847ZM50 664V590H206C265 438 344 307 447 200C337 108 202 40 36 -7C51 -25 75 -60 83 -78C250 -24 389 48 502 146C615 46 751 -28 915 -73C928 -52 950 -20 967 -4C807 36 671 107 560 201C661 304 738 432 796 590H954V664ZM504 253C410 348 336 462 284 590H711C661 455 592 344 504 253Z' fill='#111' stroke='#111' stroke-width='8' transform='translate(2.00 9.12) scale(0.00810 -0.00900)'/><path d='M317 341V268H604V-80H679V268H953V341H679V562H909V635H679V828H604V635H470C483 680 494 728 504 775L432 790C409 659 367 530 309 447C327 438 359 420 373 409C400 451 425 504 446 562H604V341ZM268 836C214 685 126 535 32 437C45 420 67 381 75 363C107 397 137 437 167 480V-78H239V597C277 667 311 741 339 815Z' fill='#111' stroke='#111' stroke-width='8' transform='translate(10.10 9.12) scale(0.00810 -0.00900)'/><path d='M40 54 58 -15C140 18 245 61 346 103L332 163C223 121 114 79 40 54ZM61 423C75 430 98 435 205 450C167 386 132 335 116 316C87 278 66 252 45 248C53 230 64 196 68 182C87 194 118 204 339 255C336 271 333 298 334 317L167 282C238 374 307 486 364 597L303 632C286 593 265 554 245 517L133 505C190 593 246 706 287 815L215 840C179 719 112 587 91 554C71 520 55 496 38 491C46 473 57 438 61 423ZM624 350V202H541V350ZM675 350H746V202H675ZM481 412V-72H541V143H624V-47H675V143H746V-46H797V143H871V-7C871 -14 868 -16 861 -17C854 -17 836 -17 814 -16C822 -32 829 -56 831 -73C867 -73 890 -71 908 -62C926 -52 930 -35 930 -8V413L871 412ZM797 350H871V202H797ZM605 826C621 798 637 762 648 732H414V515C414 361 405 139 314 -21C329 -28 360 -50 372 -63C465 99 482 335 483 498H920V732H729C717 765 697 811 675 846ZM483 668H850V561H483Z' fill='#111' stroke='#111' stroke-width='8' transform='translate(38.00 9.12) scale(0.00810 -0.00900)'/><path d='M551 751H819V650H551ZM482 808V594H892V808ZM81 332C89 340 119 346 153 346H244V202L40 167L56 94L244 132V-76H313V146L427 169L423 234L313 214V346H405V414H313V568H244V414H148C176 483 204 565 228 650H412V722H247C255 756 263 791 269 825L196 840C191 801 183 761 174 722H47V650H157C136 570 115 504 105 479C88 435 75 403 58 398C66 380 77 346 81 332ZM815 472V386H560V472ZM400 76 412 8 815 40V-80H885V46L959 52L960 115L885 110V472H953V535H423V472H491V82ZM815 329V242H560V329ZM815 185V105L560 86V185Z' fill='#111' stroke='#111' stroke-width='8' transform='translate(46.10 9.12) scale(0.00810 -0.00900)'/><path d='M450 791V259H523V725H832V259H907V791ZM154 804C190 765 229 710 247 673L308 713C290 748 250 800 211 838ZM637 649V454C637 297 607 106 354 -25C369 -37 393 -65 402 -81C552 -2 631 105 671 214V20C671 -47 698 -65 766 -65H857C944 -65 955 -24 965 133C946 138 921 148 902 163C898 19 893 -8 858 -8H777C749 -8 741 0 741 28V276H690C705 337 709 397 709 452V649ZM63 668V599H305C247 472 142 347 39 277C50 263 68 225 74 204C113 233 152 269 190 310V-79H261V352C296 307 339 250 359 219L407 279C388 301 318 381 280 422C328 490 369 566 397 644L357 671L343 668Z' fill='#111' stroke='#111' stroke-width='8' transform='translate(74.00 9.12) scale(0.00810 -0.00900)'/><path d='M375 279C455 262 557 227 613 199L644 250C588 276 487 309 407 325ZM275 152C413 135 586 95 682 61L715 117C618 149 445 188 310 203ZM84 796V-80H156V-38H842V-80H917V796ZM156 29V728H842V29ZM414 708C364 626 278 548 192 497C208 487 234 464 245 452C275 472 306 496 337 523C367 491 404 461 444 434C359 394 263 364 174 346C187 332 203 303 210 285C308 308 413 345 508 396C591 351 686 317 781 296C790 314 809 340 823 353C735 369 647 396 569 432C644 481 707 538 749 606L706 631L695 628H436C451 647 465 666 477 686ZM378 563 385 570H644C608 531 560 496 506 465C455 494 411 527 378 563Z' fill='#111' stroke='#111' stroke-width='8' transform='translate(82.10 9.12) scale(0.00810 -0.00900)'/><path d='M732 243V179H847V38H693V536H950V604H693V731C770 742 843 755 899 773L860 833C753 799 558 778 401 769C409 753 418 726 421 709C485 711 555 716 624 723V604H367V536H624V38H461V178H581V242H461V365C503 376 547 390 584 405L547 467C508 446 446 424 395 409V-79H461V-30H847V-81H916V433H731V368H847V243ZM160 840V638H54V568H160V341L37 308L55 235L160 267V8C160 -4 157 -7 146 -7C136 -7 106 -8 72 -7C82 -27 91 -58 94 -76C146 -76 180 -74 203 -62C225 -51 233 -30 233 8V289L342 323L334 391L233 362V568H329V638H233V840Z' fill='#111' stroke='#111' stroke-width='8' transform='translate(111.00 9.12) scale(0.00810 -0.00900)'/><path d='M295 755C361 709 412 653 456 591C391 306 266 103 41 -13C61 -27 96 -58 110 -73C313 45 441 229 517 491C627 289 698 58 927 -70C931 -46 951 -6 964 15C631 214 661 590 341 819Z' fill='#111' stroke='#111' stroke-width='8' transform='translate(119.10 9.12) scale(0.00810 -0.00900)'/><path d='M52 72V-3H951V72H539V650H900V727H104V650H456V72Z' fill='#111' stroke='#111' stroke-width='8' transform='translate(145.00 9.12) scale(0.00810 -0.00900)'/><path d='M605 84C716 32 832 -32 902 -81L962 -25C887 22 766 86 653 137ZM328 133C266 79 141 12 40 -26C58 -40 83 -65 95 -81C196 -40 319 25 399 88ZM212 792V209H52V141H951V209H802V792ZM284 209V300H727V209ZM284 586H727V501H284ZM284 644V730H727V644ZM284 444H727V357H284Z' fill='#111' stroke='#111' stroke-width='8' transform='translate(153.10 9.12) scale(0.00810 -0.00900)'/><path d='M371 673C293 611 182 561 86 534L125 476C230 508 342 568 426 637ZM576 631C679 587 810 516 874 469L923 518C854 566 722 632 622 674ZM432 573C417 543 391 503 367 471H164V-82H239V-40H769V-76H847V471H446C468 497 491 527 511 557ZM239 17V414H769V17ZM365 219C405 203 448 183 490 162C427 124 352 97 277 82C289 69 303 48 310 33C394 54 476 86 546 133C598 104 644 75 675 51L714 94C684 117 641 143 594 169C641 209 679 258 705 318L665 337L654 335H427C437 352 446 369 454 386L395 395C373 346 332 288 274 244C288 237 308 220 319 208C348 232 373 259 394 286H623C602 252 573 222 540 196C494 219 446 240 402 257ZM426 826C438 805 450 779 461 755H77V597H152V695H844V601H922V755H551C538 784 520 818 504 845Z' fill='#111' stroke='#111' stroke-width='8' transform='translate(180.00 9.12) scale(0.00810 -0.00900)'/><path d='M127 735V-55H205V30H796V-51H876V735ZM205 107V660H796V107Z' fill='#111' stroke='#111' stroke-width='8' transform='translate(188.10 9.12) scale(0.00810 -0.00900)'/><path d='M274 840V761H66V700H274V627H87V568H274V544C274 528 272 510 266 490H50V429H237C206 384 154 340 69 311C86 297 110 273 122 257C231 300 291 366 322 429H540V490H344C348 510 350 528 350 544V568H513V627H350V700H534V761H350V840ZM584 798V303H656V733H827C800 690 767 640 734 596C822 547 855 502 855 466C855 445 848 431 830 423C818 419 803 416 788 415C759 413 723 414 680 418C692 401 702 374 704 355C743 351 786 352 820 355C840 357 863 363 880 371C913 389 930 417 929 461C929 506 900 554 814 607C856 657 900 718 938 770L886 801L873 798ZM150 262V-26H226V194H458V-78H536V194H789V58C789 45 785 41 768 40C752 40 693 40 629 41C639 23 651 -4 655 -24C739 -24 792 -24 824 -13C856 -2 866 19 866 56V262H536V341H458V262Z' fill='#111' stroke='#111' stroke-width='8' transform='translate(220.00 9.12) scale(0.00810 -0.00900)'/><path d='M633 840C633 763 633 686 631 613H466V542H628C614 300 563 93 371 -26C389 -39 414 -64 426 -82C630 52 685 279 700 542H856C847 176 837 42 811 11C802 -1 791 -4 773 -4C752 -4 700 -3 643 1C656 -19 664 -50 666 -71C719 -74 773 -75 804 -72C836 -69 857 -60 876 -33C909 10 919 153 929 576C929 585 929 613 929 613H703C706 687 706 763 706 840ZM34 95 48 18C168 46 336 85 494 122L488 190L433 178V791H106V109ZM174 123V295H362V162ZM174 509H362V362H174ZM174 576V723H362V576Z' fill='#111' stroke='#111' stroke-width='8' transform='translate(228.10 9.12) scale(0.00810 -0.00900)'/><path d='M493 851C392 692 209 545 26 462C45 446 67 421 78 401C118 421 158 444 197 469V404H461V248H203V181H461V16H76V-52H929V16H539V181H809V248H539V404H809V470C847 444 885 420 925 397C936 419 958 445 977 460C814 546 666 650 542 794L559 820ZM200 471C313 544 418 637 500 739C595 630 696 546 807 471Z' fill='#222' stroke='#222' stroke-width='8' transform='translate(381.30 28.20) scale(0.00860 -0.00860)'/><path d='M141 628C168 574 195 502 204 455L272 475C263 521 236 591 206 645ZM627 787V-78H694V718H855C828 639 789 533 751 448C841 358 866 284 866 222C867 187 860 155 840 143C829 136 814 133 799 132C779 132 751 132 722 135C734 114 741 83 742 64C771 62 803 62 828 65C852 68 874 74 890 85C923 108 936 156 936 215C936 284 914 363 824 457C867 550 913 664 948 757L897 790L885 787ZM247 826C262 794 278 755 289 722H80V654H552V722H366C355 756 334 806 314 844ZM433 648C417 591 387 508 360 452H51V383H575V452H433C458 504 485 572 508 631ZM109 291V-73H180V-26H454V-66H529V291ZM180 42V223H454V42Z' fill='#222' stroke='#222' stroke-width='8' transform='translate(389.90 28.20) scale(0.00860 -0.00860)'/><path d='M124 769C179 720 249 652 280 608L335 661C300 703 230 769 176 815ZM200 -61V-60C214 -41 242 -20 408 98C400 113 389 143 384 163L280 92V526H46V453H206V93C206 44 175 10 157 -4C171 -17 192 -45 200 -61ZM419 770V695H816V442H438V57C438 -41 474 -65 586 -65C611 -65 790 -65 816 -65C925 -65 951 -20 962 143C940 148 908 161 889 175C884 33 874 7 812 7C773 7 621 7 591 7C527 7 515 16 515 56V370H816V318H891V770Z' fill='#111' stroke='#111' stroke-width='8' transform='translate(-4.00 237.03) scale(0.00891 -0.00990)'/><path d='M134 317C199 281 278 224 316 186L369 238C329 276 248 329 185 363ZM134 784V715H740L736 623H164V554H732L726 462H67V395H461V212C316 152 165 91 68 54L108 -13C206 29 337 85 461 140V2C461 -12 456 -16 440 -17C424 -18 368 -18 309 -16C319 -35 331 -63 335 -82C413 -82 464 -82 495 -71C527 -60 537 -42 537 1V236C623 106 748 9 904 -40C914 -20 937 9 953 25C845 54 751 107 675 177C739 216 814 272 874 323L810 370C765 325 691 266 629 224C592 266 561 314 537 365V395H940V462H804C813 565 820 688 822 784L763 788L750 784Z' fill='#111' stroke='#111' stroke-width='8' transform='translate(4.91 237.03) scale(0.00891 -0.00990)'/><path d='M759 214C816 145 875 52 897 -10L958 28C936 91 875 180 816 247ZM412 269C478 224 554 153 591 104L647 152C609 199 532 267 465 311ZM281 241V34C281 -47 312 -69 431 -69C455 -69 630 -69 656 -69C748 -69 773 -41 784 74C762 78 730 90 713 101C707 13 700 -1 650 -1C611 -1 464 -1 435 -1C371 -1 360 5 360 35V241ZM137 225C119 148 84 60 43 9L112 -24C157 36 190 130 208 212ZM265 567H737V391H265ZM186 638V319H820V638H657C692 689 729 751 761 808L684 839C658 779 614 696 575 638H370L429 668C411 715 365 784 321 836L257 806C299 755 341 685 358 638Z' fill='#111' stroke='#111' stroke-width='8' transform='translate(52.50 237.03) scale(0.00891 -0.00990)'/><path d='M137 775C193 728 263 660 295 617L346 673C312 714 241 778 186 823ZM46 526V452H205V93C205 50 174 20 155 8C169 -7 189 -41 196 -61C212 -40 240 -18 429 116C421 130 409 162 404 182L281 98V526ZM626 837V508H372V431H626V-80H705V431H959V508H705V837Z' fill='#111' stroke='#111' stroke-width='8' transform='translate(61.41 237.03) scale(0.00891 -0.00990)'/><path d='M460 363V300H69V228H460V14C460 0 455 -5 437 -6C419 -6 354 -6 287 -4C300 -24 314 -58 319 -79C404 -79 457 -78 492 -67C528 -54 539 -32 539 12V228H930V300H539V337C627 384 717 452 779 516L728 555L711 551H233V480H635C584 436 519 392 460 363ZM424 824C443 798 462 765 475 736H80V529H154V664H843V529H920V736H563C549 769 523 814 497 847Z' fill='#333' stroke='#333' stroke-width='8' transform='translate(-3.00 426.23) scale(0.00891 -0.00990)'/><path d='M538 803V682C538 609 522 520 423 454C438 445 466 420 476 406C585 479 608 591 608 680V738H748V550C748 482 761 456 828 456C840 456 889 456 903 456C922 456 943 457 954 461C952 476 950 501 949 519C937 516 915 515 902 515C890 515 846 515 834 515C820 515 817 522 817 549V803ZM467 386V321H540L501 310C533 226 577 152 634 91C565 38 483 2 393 -20C408 -35 425 -64 433 -84C528 -57 614 -17 687 41C750 -12 826 -52 913 -77C924 -58 944 -28 961 -13C876 7 802 43 739 90C807 160 858 252 887 372L840 389L827 386ZM563 321H797C772 248 734 187 685 137C632 189 591 251 563 321ZM118 751V168L33 157L46 85L118 97V-66H191V109L435 150L431 215L191 179V324H415V392H191V529H416V596H191V705C278 728 373 757 445 790L383 846C321 813 214 775 120 750Z' fill='#333' stroke='#333' stroke-width='8' transform='translate(5.91 426.23) scale(0.00891 -0.00990)'/><path d='M626 720V165H699V720ZM838 821V18C838 0 832 -5 813 -6C795 -7 737 -7 669 -5C681 -27 692 -61 696 -81C785 -81 838 -79 870 -66C900 -54 913 -31 913 19V821ZM162 728H420V536H162ZM93 796V467H492V796ZM235 442 230 355H56V287H223C205 148 160 38 33 -28C49 -40 71 -66 80 -84C223 -5 273 125 294 287H433C424 99 414 27 398 9C390 0 381 -2 366 -2C350 -2 311 -2 268 2C280 -18 288 -47 289 -70C333 -72 377 -72 400 -69C427 -67 444 -60 461 -39C487 -9 497 81 508 322C508 333 509 355 509 355H301L306 442Z' fill='#333' stroke='#333' stroke-width='8' transform='translate(-3.00 440.23) scale(0.00891 -0.00990)'/><path d='M263 529C314 494 373 446 417 406C300 344 171 299 47 273C61 256 79 224 86 204C141 217 197 233 252 253V-79H327V-27H773V-79H849V340H451C617 429 762 553 844 713L794 744L781 740H427C451 768 473 797 492 826L406 843C347 747 233 636 69 559C87 546 111 519 122 501C217 550 296 609 361 671H733C674 583 587 508 487 445C440 486 374 536 321 572ZM773 42H327V271H773Z' fill='#333' stroke='#333' stroke-width='8' transform='translate(5.91 440.23) scale(0.00891 -0.00990)'/><path d='M252 -79C275 -64 312 -51 591 38C587 54 581 83 579 104L335 31V251C395 292 449 337 492 385C570 175 710 23 917 -46C928 -26 950 3 967 19C868 48 783 97 714 162C777 201 850 253 908 302L846 346C802 303 732 249 672 207C628 259 592 319 566 385H934V450H536V539H858V601H536V686H902V751H536V840H460V751H105V686H460V601H156V539H460V450H65V385H397C302 300 160 223 36 183C52 168 74 140 86 122C142 142 201 170 258 203V55C258 15 236 -2 219 -11C231 -27 247 -61 252 -79Z' fill='#333' stroke='#333' stroke-width='8' transform='translate(-3.00 455.23) scale(0.00891 -0.00990)'/><path d='M575 667H794C764 604 723 546 675 496C627 545 590 597 563 648ZM202 840V626H52V555H193C162 417 95 260 28 175C41 158 60 129 67 109C117 175 165 284 202 397V-79H273V425C304 381 339 327 355 299L400 356C382 382 300 481 273 511V555H387L363 535C380 523 409 497 422 484C456 514 490 550 521 590C548 543 583 495 626 450C541 377 441 323 341 291C356 276 375 248 384 230C410 240 436 250 462 262V-81H532V-37H811V-77H884V270L930 252C941 271 962 300 977 315C878 345 794 392 726 449C796 522 853 610 889 713L842 735L828 732H612C628 761 642 791 654 822L582 841C543 739 478 641 403 570V626H273V840ZM532 29V222H811V29ZM511 287C570 318 625 356 676 401C725 358 782 319 847 287Z' fill='#333' stroke='#333' stroke-width='8' transform='translate(5.91 455.23) scale(0.00891 -0.00990)'/><path d='M182 840V638H55V568H182V348L42 311L57 237L182 274V14C182 1 177 -3 164 -4C154 -4 115 -4 74 -3C83 -22 93 -53 96 -72C158 -72 196 -70 221 -58C245 -47 254 -27 254 14V295L373 331L364 399L254 368V568H362V638H254V840ZM380 253V184H550V-79H623V833H550V669H401V601H550V461H404V394H550V253ZM715 833V-80H787V181H962V250H787V394H941V461H787V601H950V669H787V833Z' fill='#333' stroke='#333' stroke-width='8' transform='translate(-3.00 469.23) scale(0.00891 -0.00990)'/><path d='M371 437C438 408 518 370 583 336H230V271H542V8C542 -7 537 -11 517 -12C498 -13 431 -13 357 -11C367 -32 379 -60 383 -81C473 -81 533 -81 569 -70C606 -59 617 -38 617 7V271H833C799 225 761 178 729 146L789 116C841 166 897 245 949 317L895 340L882 336H697L705 344C685 356 658 370 629 384C712 429 798 493 857 554L808 591L791 587H288V525H724C678 485 619 444 564 416C514 439 461 462 416 481ZM471 824C486 795 504 759 517 728H120V450C120 305 113 102 31 -41C48 -49 81 -70 94 -83C180 69 193 295 193 450V658H951V728H603C589 761 564 809 543 845Z' fill='#333' stroke='#333' stroke-width='8' transform='translate(5.91 469.23) scale(0.00891 -0.00990)'/><path d='M56 769V694H747V29C747 8 740 2 718 0C694 0 612 -1 532 3C544 -19 558 -56 563 -78C662 -78 732 -78 772 -65C811 -52 825 -26 825 28V694H948V769ZM231 475H494V245H231ZM158 547V93H231V173H568V547Z' fill='#333' stroke='#333' stroke-width='8' transform='translate(-3.00 483.23) scale(0.00891 -0.00990)'/><path d='M518 298V49C518 -34 547 -56 645 -56C665 -56 801 -56 823 -56C915 -56 937 -18 947 139C926 143 895 155 878 168C874 33 866 14 818 14C788 14 674 14 650 14C600 14 592 19 592 50V298ZM452 615C443 261 430 70 46 -16C62 -32 82 -61 90 -80C493 18 520 236 531 615ZM178 784V212H256V708H739V212H820V784Z' fill='#333' stroke='#333' stroke-width='8' transform='translate(5.91 483.23) scale(0.00891 -0.00990)'/><path d='M209 536C259 491 317 426 345 384L395 431C367 470 310 531 257 575ZM87 616V-26H840V-80H915V618H840V44H162V616ZM464 607V397C361 332 256 264 187 224L224 162C293 209 379 269 464 329V170C464 158 460 154 447 154C433 153 388 153 340 155C350 135 360 107 363 87C429 87 475 88 502 99C530 110 538 130 538 169V360C621 290 707 206 754 150L801 202C763 246 699 306 631 364C684 417 745 488 795 551L732 584C697 529 638 455 587 401L538 440V577C632 625 735 695 806 762L755 801L739 797H182V728H660C603 683 529 637 464 607Z' fill='#333' stroke='#333' stroke-width='8' transform='translate(-3.00 498.23) scale(0.00891 -0.00990)'/><path d='M443 821C425 782 393 723 368 688L417 664C443 697 477 747 506 793ZM88 793C114 751 141 696 150 661L207 686C198 722 171 776 143 815ZM410 260C387 208 355 164 317 126C279 145 240 164 203 180C217 204 233 231 247 260ZM110 153C159 134 214 109 264 83C200 37 123 5 41 -14C54 -28 70 -54 77 -72C169 -47 254 -8 326 50C359 30 389 11 412 -6L460 43C437 59 408 77 375 95C428 152 470 222 495 309L454 326L442 323H278L300 375L233 387C226 367 216 345 206 323H70V260H175C154 220 131 183 110 153ZM257 841V654H50V592H234C186 527 109 465 39 435C54 421 71 395 80 378C141 411 207 467 257 526V404H327V540C375 505 436 458 461 435L503 489C479 506 391 562 342 592H531V654H327V841ZM629 832C604 656 559 488 481 383C497 373 526 349 538 337C564 374 586 418 606 467C628 369 657 278 694 199C638 104 560 31 451 -22C465 -37 486 -67 493 -83C595 -28 672 41 731 129C781 44 843 -24 921 -71C933 -52 955 -26 972 -12C888 33 822 106 771 198C824 301 858 426 880 576H948V646H663C677 702 689 761 698 821ZM809 576C793 461 769 361 733 276C695 366 667 468 648 576Z' fill='#333' stroke='#333' stroke-width='8' transform='translate(5.91 498.23) scale(0.00891 -0.00990)'/><path d='M300 182C252 121 162 48 96 10C112 -2 134 -27 146 -43C214 1 307 84 360 155ZM629 145C699 88 780 6 818 -47L875 -4C836 50 752 129 683 184ZM667 683C624 631 568 586 502 548C439 585 385 628 344 679L348 683ZM378 842C326 751 223 647 74 575C91 564 115 538 128 520C191 554 246 592 294 633C333 587 379 546 431 511C311 454 171 418 35 399C49 382 64 351 70 332C219 356 372 399 502 468C621 404 764 361 919 339C929 359 948 390 964 406C820 424 686 458 574 510C661 566 734 636 782 721L732 752L718 748H405C426 774 444 800 460 826ZM461 393V287H147V220H461V3C461 -8 457 -11 446 -11C435 -12 395 -12 357 -10C367 -29 377 -57 380 -76C438 -76 477 -76 503 -65C530 -54 537 -35 537 3V220H852V287H537V393Z' fill='#333' stroke='#333' stroke-width='8' transform='translate(-3.00 512.23) scale(0.00891 -0.00990)'/><path d='M317 341V268H604V-80H679V268H953V341H679V562H909V635H679V828H604V635H470C483 680 494 728 504 775L432 790C409 659 367 530 309 447C327 438 359 420 373 409C400 451 425 504 446 562H604V341ZM268 836C214 685 126 535 32 437C45 420 67 381 75 363C107 397 137 437 167 480V-78H239V597C277 667 311 741 339 815Z' fill='#333' stroke='#333' stroke-width='8' transform='translate(5.91 512.23) scale(0.00891 -0.00990)'/><path d='M692 791C753 761 827 715 863 681L909 733C872 767 797 811 736 837ZM62 66 77 -11C193 14 357 50 511 84L505 155C342 121 171 86 62 66ZM195 452H399V278H195ZM125 518V213H472V518ZM68 680V606H561C573 443 596 293 632 175C565 94 484 28 391 -22C408 -36 437 -65 449 -80C528 -33 599 25 661 94C706 -15 766 -81 843 -81C920 -81 948 -31 962 141C941 149 913 166 896 184C890 50 878 -3 850 -3C800 -3 755 59 719 164C793 263 853 381 897 516L822 534C790 430 746 337 692 255C667 353 649 473 640 606H936V680H635C633 731 632 784 632 838H552C552 785 554 732 557 680Z' fill='#333' stroke='#333' stroke-width='8' transform='translate(-3.00 526.23) scale(0.00891 -0.00990)'/><path d='M692 791C753 761 827 715 863 681L909 733C872 767 797 811 736 837ZM62 66 77 -11C193 14 357 50 511 84L505 155C342 121 171 86 62 66ZM195 452H399V278H195ZM125 518V213H472V518ZM68 680V606H561C573 443 596 293 632 175C565 94 484 28 391 -22C408 -36 437 -65 449 -80C528 -33 599 25 661 94C706 -15 766 -81 843 -81C920 -81 948 -31 962 141C941 149 913 166 896 184C890 50 878 -3 850 -3C800 -3 755 59 719 164C793 263 853 381 897 516L822 534C790 430 746 337 692 255C667 353 649 473 640 606H936V680H635C633 731 632 784 632 838H552C552 785 554 732 557 680Z' fill='#333' stroke='#333' stroke-width='8' transform='translate(-3.00 541.23) scale(0.00891 -0.00990)'/><path d='M692 791C753 761 827 715 863 681L909 733C872 767 797 811 736 837ZM62 66 77 -11C193 14 357 50 511 84L505 155C342 121 171 86 62 66ZM195 452H399V278H195ZM125 518V213H472V518ZM68 680V606H561C573 443 596 293 632 175C565 94 484 28 391 -22C408 -36 437 -65 449 -80C528 -33 599 25 661 94C706 -15 766 -81 843 -81C920 -81 948 -31 962 141C941 149 913 166 896 184C890 50 878 -3 850 -3C800 -3 755 59 719 164C793 263 853 381 897 516L822 534C790 430 746 337 692 255C667 353 649 473 640 606H936V680H635C633 731 632 784 632 838H552C552 785 554 732 557 680Z' fill='#333' stroke='#333' stroke-width='8' transform='translate(-3.00 555.23) scale(0.00891 -0.00990)'/><path d='M692 791C753 761 827 715 863 681L909 733C872 767 797 811 736 837ZM62 66 77 -11C193 14 357 50 511 84L505 155C342 121 171 86 62 66ZM195 452H399V278H195ZM125 518V213H472V518ZM68 680V606H561C573 443 596 293 632 175C565 94 484 28 391 -22C408 -36 437 -65 449 -80C528 -33 599 25 661 94C706 -15 766 -81 843 -81C920 -81 948 -31 962 141C941 149 913 166 896 184C890 50 878 -3 850 -3C800 -3 755 59 719 164C793 263 853 381 897 516L822 534C790 430 746 337 692 255C667 353 649 473 640 606H936V680H635C633 731 632 784 632 838H552C552 785 554 732 557 680Z' fill='#333' stroke='#333' stroke-width='8' transform='translate(-3.00 569.23) scale(0.00891 -0.00990)'/></svg>
</body></html>
